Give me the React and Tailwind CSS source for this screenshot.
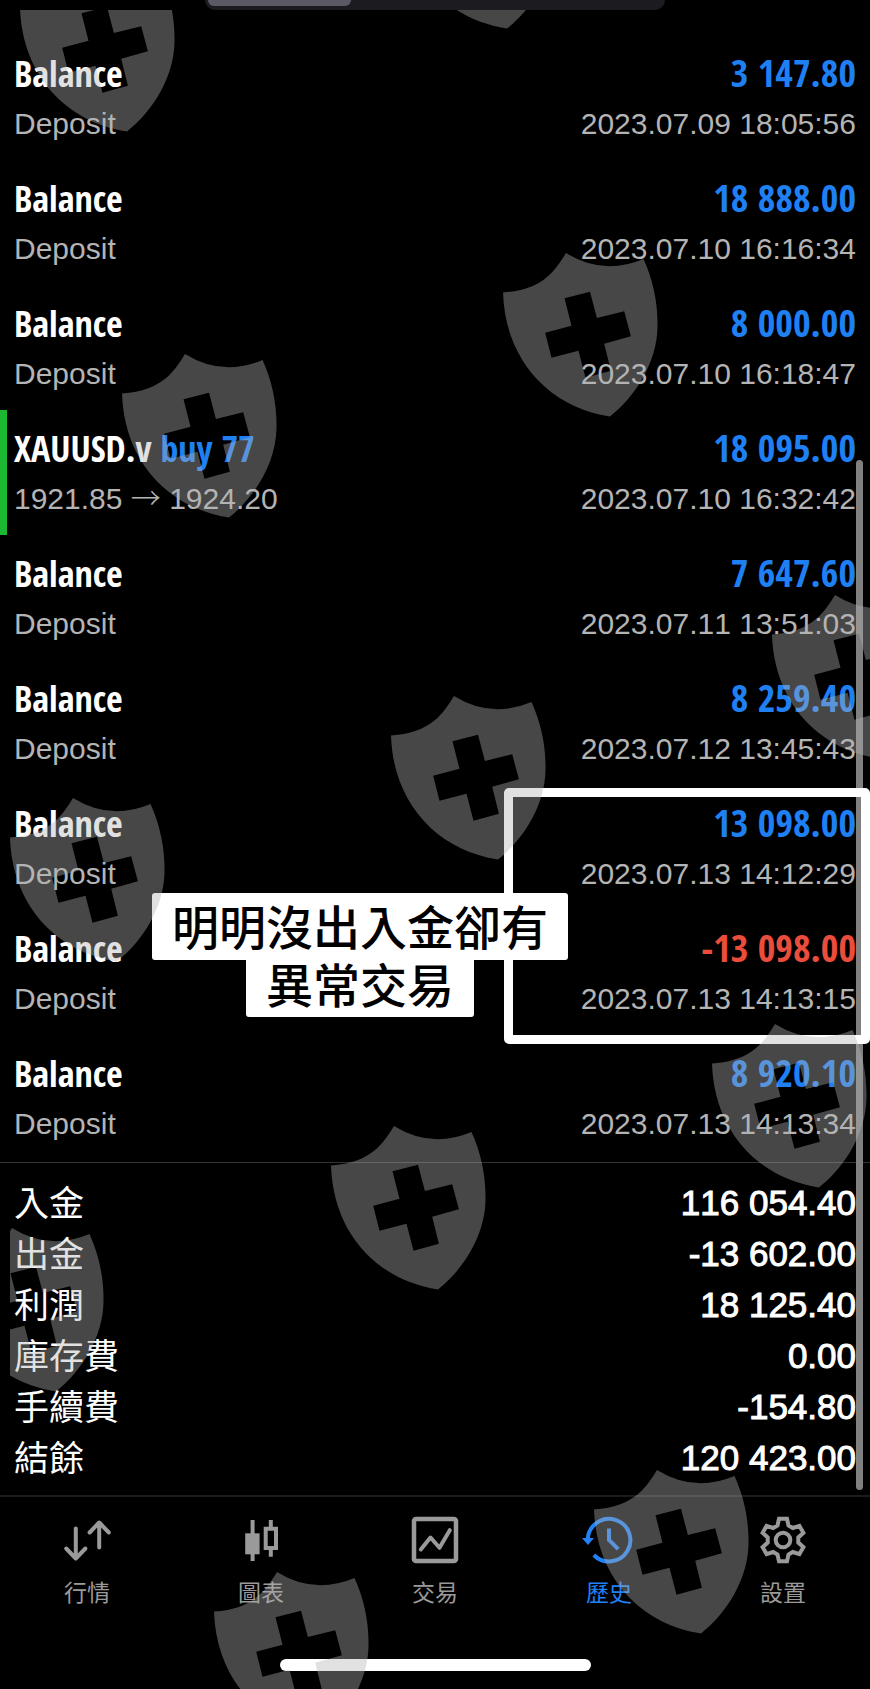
const deals = [
  { amount: "3 147.80", time: "2023.07.09 18:05:56" },
  { amount: "18 888.00", time: "2023.07.10 16:16:34" },
  { amount: "8 000.00", time: "2023.07.10 16:18:47" },
  {
    symbol: "XAUUSD.v",
    side: "buy 77",
    open: "1921.85",
    close: "1924.20",
    amount: "18 095.00",
    time: "2023.07.10 16:32:42",
  },
  { amount: "7 647.60", time: "2023.07.11 13:51:03" },
  { amount: "8 259.40", time: "2023.07.12 13:45:43" },
  { amount: "13 098.00", time: "2023.07.13 14:12:29" },
  { amount: "-13 098.00", time: "2023.07.13 14:13:15" },
  { amount: "8 920.10", time: "2023.07.13 14:13:34" },
];

const summary = [
  { label: "入金", value: "116 054.40" },
  { label: "出金", value: "-13 602.00" },
  { label: "利潤", value: "18 125.40" },
  { label: "庫存費", value: "0.00" },
  { label: "手續費", value: "-154.80" },
  { label: "結餘", value: "120 423.00" },
];

// top-left corner of every shield in the overlay
const shields = [
  [10, -42],
  [390, -145],
  [493, 243],
  [112, 344],
  [762, 585],
  [381, 686],
  [0, 788],
  [702, 1014],
  [321, 1116],
  [-61, 1218],
  [584, 1460],
  [204, 1562],
];

function Icon({ children }) {
  return (
    <svg
      viewBox="-24 -24 48 48"
      className="w-12 h-12 overflow-visible"
      fill="none"
      stroke="currentColor"
      strokeWidth="4"
      aria-hidden="true"
    >
      {children}
    </svg>
  );
}

function QuotesIcon() {
  return (
    <Icon>
      <g strokeLinecap="round" strokeLinejoin="round">
        <path d="M-11.2 -11.5V18M-20.8 8.5L-11.2 18.5L-1.6 8.5" />
        <path d="M12.2 7.5V-16M2.6 -7.5L12.2 -17.5L21.8 -7.5" />
      </g>
    </Icon>
  );
}

function ChartIcon() {
  return (
    <Icon>
      <path d="M-8.4 -20V21" />
      <path d="M-15.8 -6.7H-1.4V14.3H-15.8Z" fill="currentColor" stroke="none" />
      <path d="M9.8 -20V-12M9.8 9V16.7" />
      <path d="M4.7 -11.3H15V8H4.7Z" />
    </Icon>
  );
}

function TradeIcon() {
  return (
    <Icon>
      <rect x="-21" y="-21" width="42" height="42" rx="2" strokeWidth="4.5" />
      <path
        d="M-14.2 9.5L-4.5 -2.5L4.5 7.8L14.8 -9.8"
        strokeLinecap="round"
        strokeLinejoin="round"
      />
    </Icon>
  );
}

function HistoryIcon() {
  return (
    <Icon>
      <path d="M-21.2 -1A21.3 21.3 0 1 1 -15.2 15" />
      <path d="M-27 -2H-15L-21 5Z" fill="currentColor" stroke="none" />
      <path d="M0 -11.5V0L9.2 9.2" />
    </Icon>
  );
}

function SettingsIcon() {
  return (
    <Icon>
      <path
        d="M-5.5 -14.5L-4 -21.3H4L5.5 -14.5L9.8 -12L16.4 -14.1L20.4 -7.2L15.3 -2.5V2.5L20.4 7.2L16.4 14.1L9.8 12L5.5 14.5L4 21.3H-4L-5.5 14.5L-9.8 12L-16.4 14.1L-20.4 7.2L-15.3 2.5V-2.5L-20.4 -7.2L-16.4 -14.1L-9.8 -12Z"
      />
      <circle r="7.3" />
    </Icon>
  );
}

const tabs = [
  { label: "行情", icon: QuotesIcon },
  { label: "圖表", icon: ChartIcon },
  { label: "交易", icon: TradeIcon },
  { label: "歷史", icon: HistoryIcon, active: true },
  { label: "設置", icon: SettingsIcon },
];

function DealRow({ deal }) {
  const negative = deal.amount.startsWith("-");
  return (
    <li
      className={`border-l-[7px] pl-[7px] pr-3.5 pt-3 pb-[11px] ${
        deal.side ? "border-[#1db832]" : "border-transparent"
      }`}
    >
      <div className="flex h-[52px] justify-between items-baseline font-['Open_Sans_Condensed',sans-serif] font-bold text-[36px] leading-[50px]">
        <span>
          {deal.symbol || "Balance"}
          {deal.side && <span className="text-[#1f80f4]"> {deal.side}</span>}
        </span>
        <span
          className={`text-[38px] ${negative ? "text-[#eb4d3d]" : "text-[#1f80f4]"}`}
        >
          {deal.amount}
        </span>
      </div>
      <div className="flex h-[50px] justify-between items-baseline text-[30px] leading-[50px] text-[#b4b4b4]">
        {deal.side ? (
          <span>
            {deal.open}{" "}
            <span className="font-['Noto_Sans_CJK_TC',sans-serif] font-light leading-none">
              →
            </span>{" "}
            {deal.close}
          </span>
        ) : (
          <span>Deposit</span>
        )}
        <time>{deal.time}</time>
      </div>
    </li>
  );
}

function ShieldOverlay() {
  return (
    <svg
      className="absolute left-2.5 top-2.5 w-full h-full pointer-events-none"
      fill="#b2b2b2"
      fillOpacity="0.395"
      aria-hidden="true"
    >
      {shields.map(([x, y]) => (
        <path
          key={`${x},${y}`}
          transform={`translate(${x} ${y})`}
          fillRule="evenodd"
          d="M0 39.5C41 37 53 16 63 0Q100 23 140.5 6C150 27 155 50 154.5 74C154 108 134 142 107 163.5C45 154 2 106 0 39.5ZM61.5 45.3L68.5 72.8L42.2 79.8L48.5 104.8L75.5 97.8L82.5 124.8L107.9 117.8L101.2 90.8L127.9 83.3L121.2 58.3L93.9 65.1L87 38.8Z"
        />
      ))}
    </svg>
  );
}

export default function App() {
  return (
    <div className="relative overflow-hidden bg-black text-white font-['Liberation_Sans','Noto_Sans_CJK_TC',sans-serif] [font-kerning:none]">
      <header className="h-[35px]">
        <div className="mx-auto w-[460px] h-2.5 rounded-b-[16px] bg-[#1c1b20]">
          <div className="ml-[3px] w-[143px] h-1.5 rounded-b-[12px] bg-[#5b5a64]" />
        </div>
      </header>

      <main>
        <ul className="pb-0.5">
          {deals.map((deal) => (
            <DealRow key={deal.time} deal={deal} />
          ))}
        </ul>

        <dl className="border-t border-[#333] pt-3.5 pb-3 px-3.5">
          {summary.map((row) => (
            <div key={row.label} className="flex justify-between items-start">
              <dt className="text-[35px] leading-[47px] font-['Noto_Sans_CJK_TC',sans-serif]">
                {row.label}
              </dt>
              <dd className="text-[35px] leading-[51px] [-webkit-text-stroke:1px]">
                {row.value}
              </dd>
            </div>
          ))}
        </dl>
      </main>

      <nav className="grid grid-cols-5 border-t-2 border-[#1b1b1b] pt-[19px]">
        {tabs.map(({ label, icon: TabIcon, active }) => (
          <button
            key={label}
            type="button"
            className={`flex flex-col items-center gap-3 text-[23px] leading-[30px] font-['Noto_Sans_CJK_TC',sans-serif] ${
              active ? "text-[#2181f7]" : "text-[#9a9a9a]"
            }`}
          >
            <TabIcon />
            {label}
          </button>
        ))}
      </nav>
      <div className="pt-[53px] pb-[18px]">
        <div className="mx-auto w-[311px] h-3 rounded-full bg-white" />
      </div>

      {/* scroll thumb */}
      <div className="absolute right-[7px] top-[460px] w-[7px] h-[1030px] rounded-full bg-[#808080]" />

      {/* highlighted pair of deals */}
      <div className="absolute right-0 top-[788px] w-[366px] h-[256px] border-[9px] border-white rounded-[5px]" />

      <p className="absolute left-[152px] top-[893px] flex flex-col items-center font-['Noto_Sans_CJK_TC',sans-serif] font-medium text-[47px] text-black">
        <span className="px-5 pb-1 leading-[63px] bg-white rounded-[3px]">
          明明沒出入金卻有
        </span>
        <span className="px-5 pb-3 leading-[45px] bg-white rounded-b-[3px]">
          異常交易
        </span>
      </p>

      <ShieldOverlay />
    </div>
  );
}
